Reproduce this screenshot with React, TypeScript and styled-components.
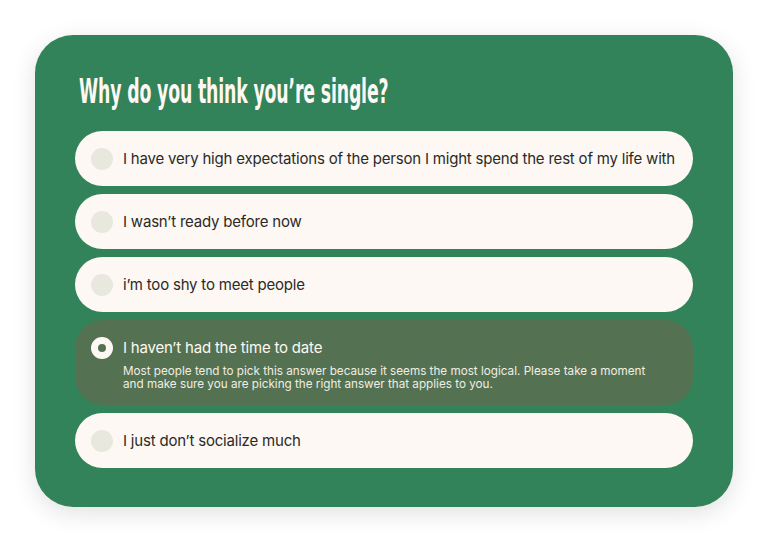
import React, { useState } from "react";
import styled, { createGlobalStyle } from "styled-components";

const Global = createGlobalStyle`
  html, body { margin: 0; padding: 0; background: #ffffff; }
  body { font-family: Inter, "Noto Sans", sans-serif; }
`;

const Page = styled.div`
  width: 768px;
  height: 543px;
  padding: 35px 35px 0 35px;
  box-sizing: border-box;
`;

const Card = styled.div`
  width: 698px;
  height: 472px;
  box-sizing: border-box;
  background: #32825a;
  border-radius: 38px;
  padding: 36px 40px 40px 40px;
  box-shadow: 0 6px 24px rgba(0, 0, 0, 0.12);
  display: flex;
  flex-direction: column;
`;

const Title = styled.h1`
  margin: 0 0 18px 4px;
  font-family: "DejaVu Sans", sans-serif;
  font-weight: 700;
  font-size: 33px;
  line-height: 42px;
  color: #fdf8f3;
  letter-spacing: -0.3px;
  white-space: nowrap;
  transform: scaleX(0.525);
  transform-origin: left center;
`;

const List = styled.div`
  display: flex;
  flex-direction: column;
  gap: 8px;
`;

const Row = styled.div<{ $selected: boolean }>`
  display: flex;
  flex-direction: column;
  justify-content: center;
  min-height: 55px;
  box-sizing: border-box;
  padding: ${(p) => (p.$selected ? "17px 20px 14px 16px" : "0 20px 0 16px")};
  border-radius: 28px;
  background: ${(p) => (p.$selected ? "#547251" : "#fdf8f3")};
  cursor: pointer;
`;

const Head = styled.div`
  display: flex;
  align-items: center;
  gap: 10px;
`;

const Radio = styled.span<{ $selected: boolean }>`
  width: 22px;
  height: 22px;
  border-radius: 50%;
  box-sizing: border-box;
  flex: none;
  background: ${(p) => (p.$selected ? "#547251" : "#e8e8df")};
  border: ${(p) => (p.$selected ? "7px solid #fdf8f3" : "none")};
`;

const Label = styled.span<{ $selected: boolean }>`
  font-size: 15px;
  line-height: 20px;
  white-space: nowrap;
  color: ${(p) => (p.$selected ? "#fdf8f3" : "#2b2a28")};
  letter-spacing: -0.2px;
`;

const Desc = styled.p`
  margin: 6px 0 0 32px;
  max-width: 530px;
  font-size: 11.7px;
  line-height: 13px;
  color: #f1ede4;
`;

const options = [
  "I have very high expectations of the person I might spend the rest of my life with",
  "I wasn\u2019t ready before now",
  "i\u2019m too shy to meet people",
  "I haven\u2019t had the time to date",
  "I just don\u2019t socialize much",
];

export default function App() {
  const [sel, setSel] = useState(3);
  return (
    <>
      <Global />
      <Page>
        <Card>
          <Title>Why do you think you’re single?</Title>
          <List>
            {options.map((o, i) => (
              <Row key={i} $selected={sel === i} onClick={() => setSel(i)}>
                <Head>
                  <Radio $selected={sel === i} />
                  <Label $selected={sel === i}>{o}</Label>
                </Head>
                {sel === i && (
                  <Desc>
                    Most people tend to pick this answer because it seems the most logical. Please take a moment
                    and make sure you are picking the right answer that applies to you.
                  </Desc>
                )}
              </Row>
            ))}
          </List>
        </Card>
      </Page>
    </>
  );
}
